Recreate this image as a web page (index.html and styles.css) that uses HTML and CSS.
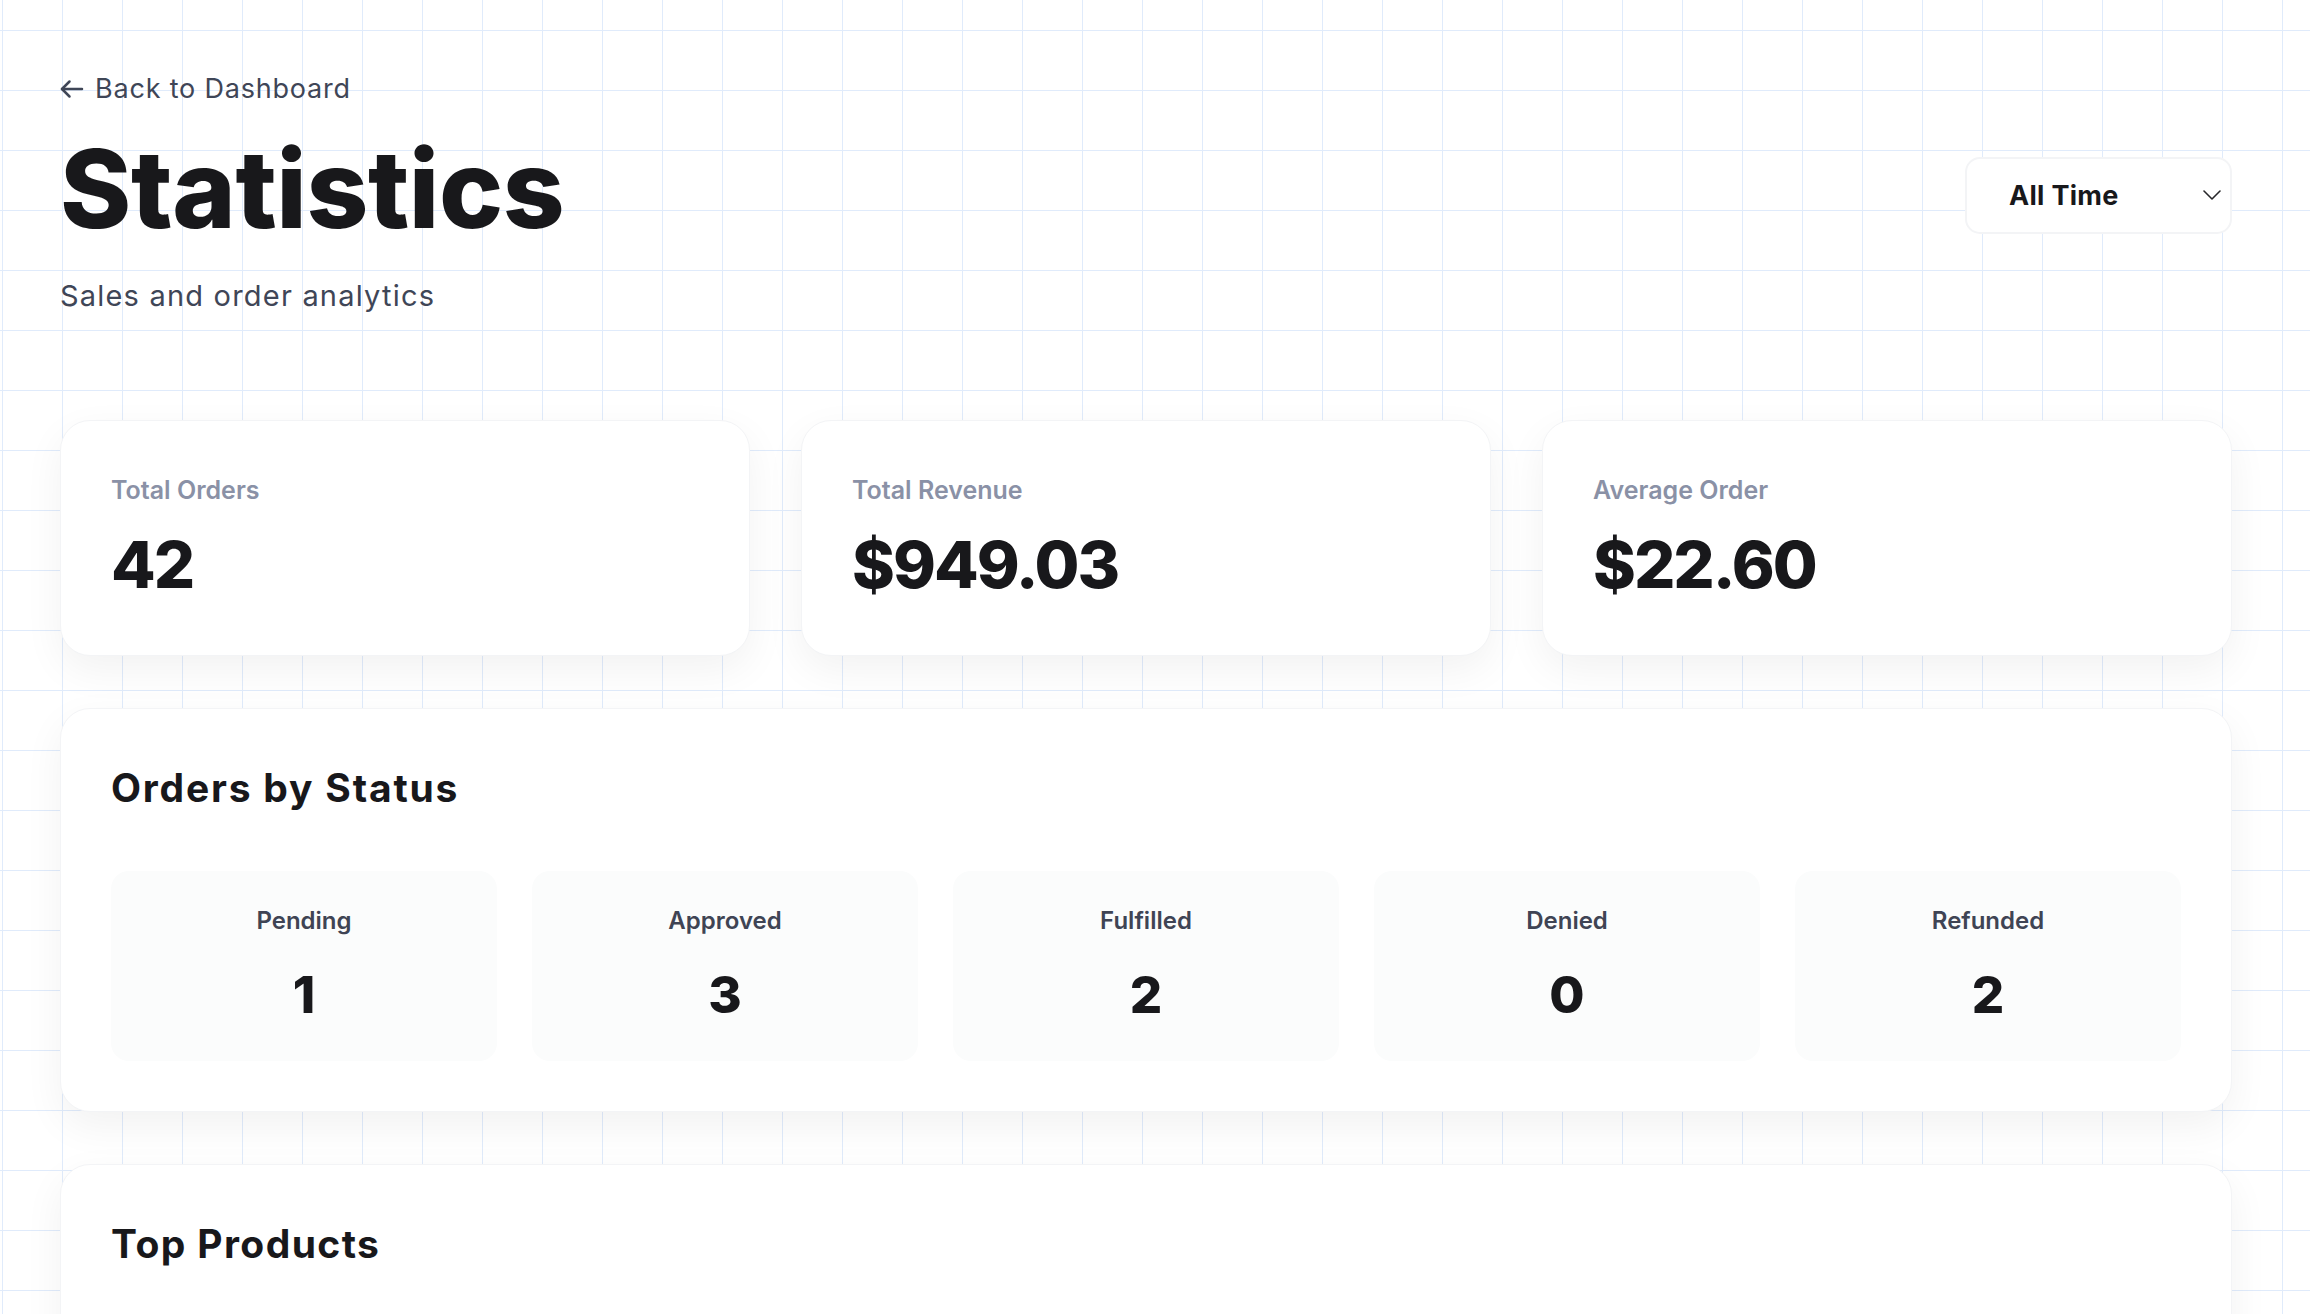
FILE: index.html
```html
<!DOCTYPE html>
<html lang="en">
<head>
<meta charset="utf-8">
<title>Statistics</title>
<link rel="stylesheet" href="styles.css">
</head>
<body>
<main class="page">
  <header class="page-header">
    <div class="header-text">
      <a class="back-link" href="#">
        <svg class="back-icon" viewBox="0 0 24 24" fill="none" stroke="currentColor" stroke-width="2" stroke-linecap="round" stroke-linejoin="round"><path d="M20 12H4"/><path d="M10 6l-6 6 6 6"/></svg>
        <span>Back to Dashboard</span>
      </a>
      <h1 class="title">Statistics</h1>
      <p class="subtitle">Sales and order analytics</p>
    </div>
    <div class="range-select">
      <span class="range-label">All Time</span>
      <svg class="range-chevron" viewBox="0 0 18 10" fill="none" stroke="currentColor" stroke-width="1.6" stroke-linecap="round" stroke-linejoin="round"><path d="M1 1l8 8 8-8"/></svg>
    </div>
  </header>

  <section class="summary">
    <div class="card stat-card">
      <div class="stat-label">Total Orders</div>
      <div class="stat-value">42</div>
    </div>
    <div class="card stat-card">
      <div class="stat-label">Total Revenue</div>
      <div class="stat-value">$949.03</div>
    </div>
    <div class="card stat-card">
      <div class="stat-label">Average Order</div>
      <div class="stat-value">$22.60</div>
    </div>
  </section>

  <section class="card panel">
    <h2 class="panel-title">Orders by Status</h2>
    <div class="status-grid">
      <div class="status-tile"><div class="status-label">Pending</div><div class="status-value">1</div></div>
      <div class="status-tile"><div class="status-label">Approved</div><div class="status-value">3</div></div>
      <div class="status-tile"><div class="status-label">Fulfilled</div><div class="status-value">2</div></div>
      <div class="status-tile"><div class="status-label">Denied</div><div class="status-value">0</div></div>
      <div class="status-tile"><div class="status-label">Refunded</div><div class="status-value">2</div></div>
    </div>
  </section>

  <section class="card panel">
    <h2 class="panel-title panel-title-short">Top Products</h2>
    <div class="products-body"></div>
  </section>
</main>
</body>
</html>
```

FILE: styles.css
```css
html, body {
  margin: 0;
  padding: 0;
}

body {
  font-family: "Inter", "Noto Sans", sans-serif;
  color: #18181b;
  background-color: #ffffff;
  background-image:
    linear-gradient(to right, #e0ebfb 1.5px, transparent 1.5px),
    linear-gradient(to bottom, #e0ebfb 1.5px, transparent 1.5px);
  background-size: 60px 60px;
  background-position: 2px 30px;
  min-height: 100vh;
}

.page {
  width: 2172px;
  padding: 68px 0 60px 60px;
  box-sizing: content-box;
}

.page-header {
  display: flex;
  align-items: center;
  justify-content: space-between;
}

.header-text {
  display: flex;
  flex-direction: column;
  align-items: flex-start;
}

.back-link {
  display: flex;
  align-items: center;
  gap: 8px;
  font-size: 27px;
  line-height: 42px;
  letter-spacing: 0.8px;
  color: #3f4657;
  text-decoration: none;
  font-weight: 400;
}

.back-icon {
  width: 30px;
  height: 30px;
  margin-left: -3px;
}

.title {
  margin: 19px 0 0;
  font-size: 108px;
  line-height: 119px;
  font-weight: 800;
  letter-spacing: -0.4px;
  color: #18181b;
}

.subtitle {
  margin: 25px 0 0;
  font-size: 29px;
  line-height: 45px;
  letter-spacing: 1.2px;
  color: #3f4657;
}

.range-select {
  width: 267px;
  height: 77px;
  box-sizing: border-box;
  border: 2.5px solid #f3f4f6;
  border-radius: 15px;
  background: #ffffff;
  display: flex;
  align-items: center;
  justify-content: space-between;
  padding: 0 9px 0 42px;
  margin-top: 4px;
}

.range-label {
  font-size: 27px;
  font-weight: 700;
  letter-spacing: 0.3px;
  color: #18181b;
}

.range-chevron {
  width: 18px;
  height: 10px;
  color: #27272a;
}

.card {
  background: #ffffff;
  border: 1.5px solid #f3f4f6;
  border-radius: 30px;
  box-shadow: 0 14px 40px rgba(0, 0, 0, 0.055);
  box-sizing: border-box;
}

.summary {
  display: grid;
  grid-template-columns: repeat(3, 1fr);
  gap: 51px;
  margin-top: 102px;
}

.stat-card {
  height: 236px;
  padding: 51px 50px 0;
}

.stat-label {
  font-size: 25px;
  line-height: 36px;
  font-weight: 600;
  color: #8a91a6;
}

.stat-value {
  margin-top: 18px;
  font-size: 65px;
  line-height: 78px;
  font-weight: 800;
  letter-spacing: -2px;
  color: #18181b;
}

.panel {
  margin-top: 52px;
  padding: 53px 50px 50px;
}

.panel-title {
  margin: 0;
  font-size: 39px;
  line-height: 51px;
  font-weight: 700;
  letter-spacing: 1.8px;
  color: #18181b;
}

.panel-title-short {
  letter-spacing: 1.4px;
}

.status-grid {
  display: grid;
  grid-template-columns: repeat(5, 1fr);
  gap: 35px;
  margin-top: 58px;
}

.status-tile {
  height: 190px;
  box-sizing: border-box;
  background: #fbfcfc;
  border-radius: 18px;
  padding-top: 33px;
  text-align: center;
}

.status-label {
  font-size: 24px;
  line-height: 34px;
  font-weight: 600;
  color: #3f4454;
}

.status-value {
  margin-top: 26px;
  font-size: 51px;
  line-height: 62px;
  font-weight: 800;
  color: #18181b;
}

.products-body {
  height: 200px;
}
```
